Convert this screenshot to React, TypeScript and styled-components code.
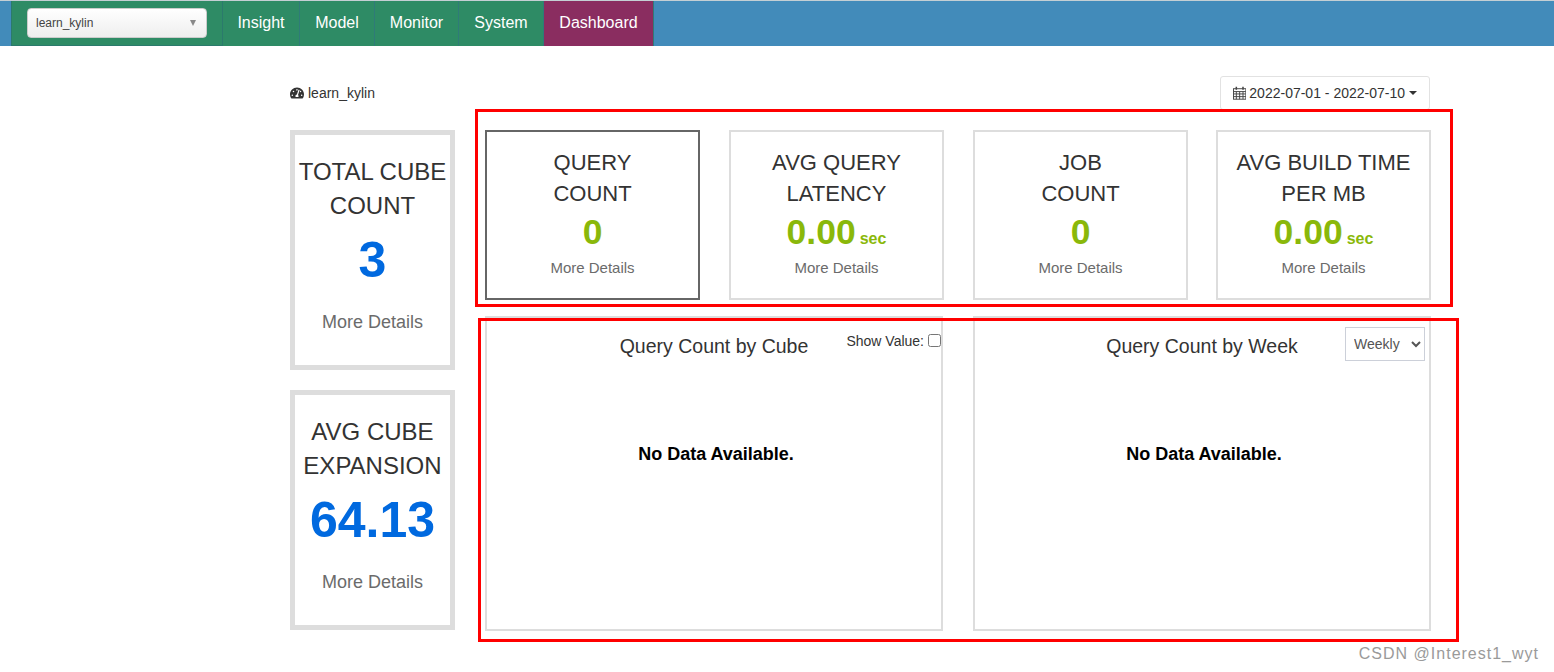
import styled, { createGlobalStyle } from 'styled-components';
import { FaTachometerAlt } from 'react-icons/fa';

const GlobalStyle = createGlobalStyle`
  html, body {
    margin: 0;
    padding: 0;
    background: #fff;
    font-family: "Liberation Sans", Arial, sans-serif;
  }
  * { box-sizing: border-box; }
`;

const Page = styled.div`
  position: relative;
  width: 1554px;
  height: 672px;
  overflow: hidden;
`;

const Navbar = styled.nav`
  display: flex;
  height: 46px;
  padding-left: 11px;
  background: #428bba;
  border-top: 1px solid #c4cfd4;
`;

const ProjectSlot = styled.div`
  display: flex;
  align-items: center;
  width: 212px;
  padding: 0 15px 1px 15px;
  background: #2e8b65;
  border-left: 1px solid #2b7a6c;
  border-right: 1px solid #2b7a6c;
  border-bottom: 1px solid #2b7a6c;
`;

const ProjectSelect = styled.div`
  display: flex;
  align-items: center;
  justify-content: space-between;
  width: 180px;
  height: 30px;
  padding: 0 10px 0 8px;
  border: 1px solid #ccc;
  border-radius: 4px;
  background: linear-gradient(#fff, #eee);
  color: #444;
  font-size: 12px;
`;

const Arrow = styled.span`
  width: 0;
  height: 0;
  border-left: 3.5px solid transparent;
  border-right: 3.5px solid transparent;
  border-top: 6px solid #888;
`;

const NavItem = styled.a<{ $width: number; $active?: boolean }>`
  display: flex;
  align-items: center;
  justify-content: center;
  width: ${p => p.$width}px;
  padding: 0 0 2px;
  background: ${p => (p.$active ? '#8a2d60' : '#2e8b65')};
  border-right: 1px solid #2f7b78;
  color: #fff;
  font-size: 16px;
`;

const Content = styled.main`
  width: 1141px;
  margin-left: 290px;
`;

const HeaderRow = styled.div`
  display: flex;
  align-items: center;
  justify-content: space-between;
  height: 34px;
  margin-top: 30px;
`;

const ProjectLabel = styled.div`
  display: flex;
  align-items: center;
  gap: 4px;
  color: #333;
  font-size: 14px;
`;

const DateButton = styled.button`
  display: flex;
  align-items: center;
  gap: 3px;
  width: 210px;
  height: 34px;
  margin-right: 1px;
  padding: 0 12px;
  border: 1px solid #e2e2e2;
  border-radius: 3px;
  background: #fff;
  color: #333;
  font-family: inherit;
  font-size: 14px;
  white-space: nowrap;
`;

const Caret = styled.span`
  width: 0;
  height: 0;
  margin-left: 1px;
  border-left: 4px solid transparent;
  border-right: 4px solid transparent;
  border-top: 4px solid #333;
`;

const Board = styled.div`
  display: grid;
  grid-template-columns: 165px 946px;
  gap: 30px;
  margin-top: 20px;
`;

const SideColumn = styled.div`
  display: flex;
  flex-direction: column;
  gap: 20px;
`;

const MainColumn = styled.div`
  display: flex;
  flex-direction: column;
  gap: 16px;
`;

const SideCard = styled.div`
  display: flex;
  flex-direction: column;
  align-items: center;
  height: 240px;
  padding-top: 20px;
  border: 5px solid #ddd;
  text-align: center;
`;

const SideTitle = styled.div`
  color: #333;
  font-size: 24px;
  line-height: 34px;
`;

const SideValue = styled.div`
  margin-top: 2px;
  color: #0069df;
  font-size: 50px;
  font-weight: bold;
  line-height: 70px;
`;

const SideLink = styled.a`
  margin-top: 14px;
  color: #6b6b6b;
  font-size: 18px;
  line-height: 26px;
`;

const MetricGrid = styled.div`
  display: grid;
  grid-template-columns: 244px 244px 243px 215px;
`;

const MetricCard = styled.div<{ $selected?: boolean }>`
  display: flex;
  flex-direction: column;
  align-items: center;
  width: 215px;
  height: 170px;
  padding-top: 15px;
  border: 2px solid ${p => (p.$selected ? '#666' : '#ddd')};
  text-align: center;
`;

const MetricTitle = styled.div`
  color: #333;
  font-size: 22px;
  line-height: 31px;
`;

const MetricValue = styled.div`
  height: 47px;
  color: #8ab80a;
  font-size: 35.5px;
  font-weight: bold;
  line-height: 47px;
`;

const MetricUnit = styled.small`
  margin-left: 4px;
  font-size: 16px;
  line-height: 1;
`;

const MetricLink = styled.a`
  margin-top: 2px;
  color: #6b6b6b;
  font-size: 15px;
  line-height: 20px;
`;

const ChartGrid = styled.div`
  display: grid;
  grid-template-columns: repeat(2, 458px);
  gap: 30px;
`;

const ChartCard = styled.section`
  position: relative;
  display: flex;
  flex-direction: column;
  align-items: center;
  height: 315px;
  padding-top: 16px;
  border: 2px solid #ddd;
`;

const ChartTitle = styled.h3`
  margin: 0;
  color: #333;
  font-size: 19.5px;
  font-weight: normal;
  line-height: 24px;
`;

const NoData = styled.div`
  margin-top: 84px;
  padding-left: 4px;
  color: #000;
  font-size: 18px;
  font-weight: bold;
  line-height: 24px;
`;

const ShowValue = styled.label`
  position: absolute;
  top: 15px;
  right: 0;
  display: flex;
  align-items: center;
  gap: 4px;
  color: #333;
  font-size: 14px;
`;

const ValueCheck = styled.input`
  width: 13px;
  height: 13px;
  margin: 0 0 2px;
`;

const RangeSelect = styled.select`
  position: absolute;
  top: 9px;
  right: 4px;
  width: 80px;
  height: 34px;
  padding: 0 4px;
  border: 1px solid #ccd0d9;
  background: #fff;
  color: #555;
  font-family: inherit;
  font-size: 14px;
`;

const Annotation = styled.div<{ $x: number; $y: number; $w: number; $h: number }>`
  position: absolute;
  left: ${p => p.$x}px;
  top: ${p => p.$y}px;
  width: ${p => p.$w}px;
  height: ${p => p.$h}px;
  border: 3px solid #f00;
  pointer-events: none;
`;

const Watermark = styled.div`
  position: absolute;
  right: 15px;
  top: 644px;
  color: #9a9a9a;
  font-size: 16px;
  letter-spacing: 1px;
  line-height: 20px;
`;

const CalendarIcon = () => (
  <svg width="14" height="14" viewBox="0 0 14 14" fill="none" stroke="#444" strokeWidth="1">
    <rect x="0.5" y="2.5" width="13" height="11" />
    <path d="M0.5 5.5H13.5M0.5 8H13.5M0.5 10.8H13.5M3.5 5.5V13.5M7 5.5V13.5M10.5 5.5V13.5" />
    <path d="M3.5 0.5V3.5M10.5 0.5V3.5" strokeWidth="1.6" />
  </svg>
);

const sideCards = [
  { title: ['TOTAL CUBE', 'COUNT'], value: '3' },
  { title: ['AVG CUBE', 'EXPANSION'], value: '64.13' },
];

const metricCards = [
  { title: ['QUERY', 'COUNT'], value: '0', selected: true },
  { title: ['AVG QUERY', 'LATENCY'], value: '0.00', unit: 'sec' },
  { title: ['JOB', 'COUNT'], value: '0' },
  { title: ['AVG BUILD TIME', 'PER MB'], value: '0.00', unit: 'sec' },
];

const navItems = [
  { label: 'Insight', width: 77 },
  { label: 'Model', width: 75 },
  { label: 'Monitor', width: 84 },
  { label: 'System', width: 85 },
];

const App = () => (
  <Page>
    <GlobalStyle />
    <Navbar>
      <ProjectSlot>
        <ProjectSelect>
          learn_kylin
          <Arrow />
        </ProjectSelect>
      </ProjectSlot>
      {navItems.map(item => (
        <NavItem key={item.label} $width={item.width}>{item.label}</NavItem>
      ))}
      <NavItem $width={110} $active>Dashboard</NavItem>
    </Navbar>

    <Content>
      <HeaderRow>
        <ProjectLabel>
          <FaTachometerAlt size={14} />
          learn_kylin
        </ProjectLabel>
        <DateButton>
          <CalendarIcon />
          2022-07-01 - 2022-07-10
          <Caret />
        </DateButton>
      </HeaderRow>

      <Board>
        <SideColumn>
          {sideCards.map(card => (
            <SideCard key={card.value}>
              <SideTitle>{card.title[0]}<br />{card.title[1]}</SideTitle>
              <SideValue>{card.value}</SideValue>
              <SideLink>More Details</SideLink>
            </SideCard>
          ))}
        </SideColumn>

        <MainColumn>
          <MetricGrid>
            {metricCards.map(card => (
              <MetricCard key={card.title.join()} $selected={card.selected}>
                <MetricTitle>{card.title[0]}<br />{card.title[1]}</MetricTitle>
                <MetricValue>
                  {card.value}
                  {card.unit && <MetricUnit>{card.unit}</MetricUnit>}
                </MetricValue>
                <MetricLink>More Details</MetricLink>
              </MetricCard>
            ))}
          </MetricGrid>

          <ChartGrid>
            <ChartCard>
              <ChartTitle>Query Count by Cube</ChartTitle>
              <ShowValue>
                Show Value:
                <ValueCheck type="checkbox" />
              </ShowValue>
              <NoData>No Data Available.</NoData>
            </ChartCard>
            <ChartCard>
              <ChartTitle>Query Count by Week</ChartTitle>
              <RangeSelect defaultValue="Weekly">
                <option>Daily</option>
                <option>Weekly</option>
                <option>Monthly</option>
              </RangeSelect>
              <NoData>No Data Available.</NoData>
            </ChartCard>
          </ChartGrid>
        </MainColumn>
      </Board>
    </Content>

    <Annotation $x={475} $y={109} $w={978} $h={198} />
    <Annotation $x={478} $y={318} $w={981} $h={324} />
    <Watermark>CSDN @Interest1_wyt</Watermark>
  </Page>
);

export default App;
